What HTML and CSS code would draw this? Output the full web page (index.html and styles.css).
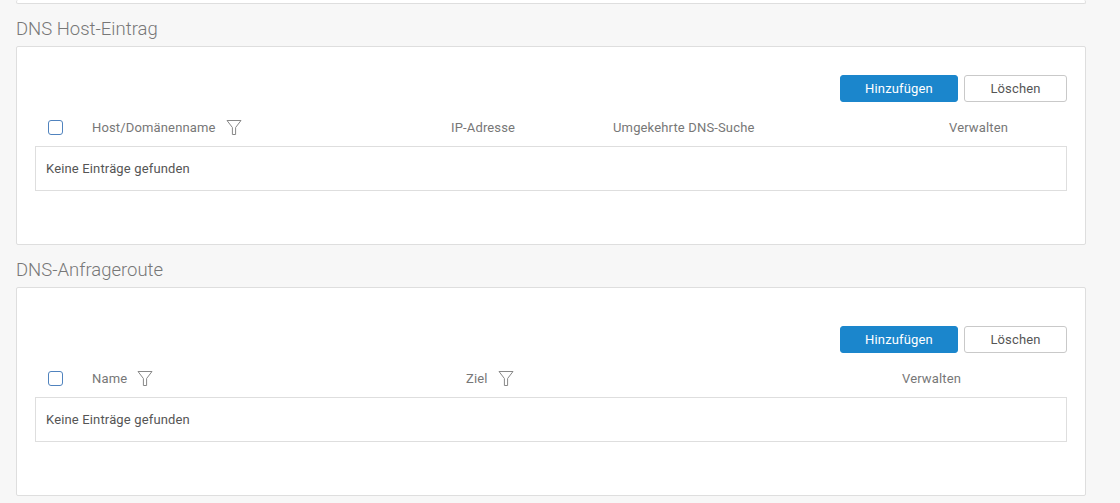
FILE: index.html
```html
<!DOCTYPE html>
<html lang="de">

<head>
  <meta charset="UTF-8" />
  <meta name="viewport" content="width=device-width, initial-scale=1.0" />
  <title>DNS</title>
  <link rel="stylesheet" href="styles.css">
</head>

<body>
  <div class="page">
    <div class="card card-stub"></div>

    <h2 class="section-title">DNS Host-Eintrag</h2>
    <div class="card">
      <div class="toolbar">
        <button class="btn btn-primary">Hinzufügen</button>
        <button class="btn">Löschen</button>
      </div>
      <div class="grid-head hosts">
        <span class="check"></span>
        <span class="col">Host/Domänenname
          <svg class="filter" viewBox="0 0 16 17"><path d="M1 1.5H15L9.6 8.5V15.5H6.4V8.5Z" /></svg>
        </span>
        <span class="col">IP-Adresse</span>
        <span class="col">Umgekehrte DNS-Suche</span>
        <span class="col">Verwalten</span>
      </div>
      <div class="grid-body">Keine Einträge gefunden</div>
    </div>

    <h2 class="section-title">DNS-Anfrageroute</h2>
    <div class="card card-tall">
      <div class="toolbar">
        <button class="btn btn-primary">Hinzufügen</button>
        <button class="btn">Löschen</button>
      </div>
      <div class="grid-head routes">
        <span class="check"></span>
        <span class="col">Name
          <svg class="filter" viewBox="0 0 16 17"><path d="M1 1.5H15L9.6 8.5V15.5H6.4V8.5Z" /></svg>
        </span>
        <span class="col">Ziel
          <svg class="filter" viewBox="0 0 16 17"><path d="M1 1.5H15L9.6 8.5V15.5H6.4V8.5Z" /></svg>
        </span>
        <span class="col">Verwalten</span>
      </div>
      <div class="grid-body">Keine Einträge gefunden</div>
    </div>
  </div>
</body>

</html>
```

FILE: styles.css
```css
body {
  margin: 0;
  background-color: #f7f7f7;
  font-family: Roboto, 'Noto Sans', sans-serif;
  color: #555;
}

.page {
  width: 1070px;
  padding-left: 16px;
}

.card {
  background-color: #fff;
  border: 1px solid #dedede;
  border-radius: 2px;
  padding: 28px 18px 53px;
}

.card-stub {
  height: 3px;
  padding: 0;
  border-top: none;
}

.card-tall {
  padding-top: 38px;
}

.section-title {
  margin: 0;
  padding: 15px 0 7px;
  font-size: 18.5px;
  line-height: 20px;
  font-weight: 300;
  color: #777;
}

.toolbar {
  display: flex;
  justify-content: flex-end;
  gap: 6px;
}

.btn {
  height: 27px;
  width: 103px;
  border: 1px solid #c9c9c9;
  border-radius: 3px;
  background-color: #fff;
  color: #555;
  font-family: inherit;
  font-size: 13px;
  letter-spacing: 0.15px;
  padding: 0;
}

.btn-primary {
  width: 118px;
  background-color: #1b86cc;
  border-color: #1b86cc;
  color: #fff;
}

.grid-head {
  display: grid;
  align-items: center;
  height: 38px;
  padding: 6px 0 0 13px;
  font-size: 13px;
  letter-spacing: 0.15px;
  color: #777;
}

.grid-head.hosts {
  grid-template-columns: 44px 359px 162px 336px auto;
}

.grid-head.routes {
  grid-template-columns: 44px 374px 436px auto;
}

.check {
  width: 13px;
  height: 13px;
  border: 1.5px solid #5083be;
  border-radius: 3px;
}

.col {
  display: flex;
  align-items: center;
}

.filter {
  width: 16px;
  height: 17px;
  margin-left: 10px;
  fill: none;
  stroke: #888;
  stroke-width: 1;
}

.grid-body {
  border: 1px solid #dedede;
  height: 43px;
  line-height: 43px;
  padding-left: 10px;
  font-size: 13px;
  letter-spacing: 0.15px;
  color: #555;
}
```
